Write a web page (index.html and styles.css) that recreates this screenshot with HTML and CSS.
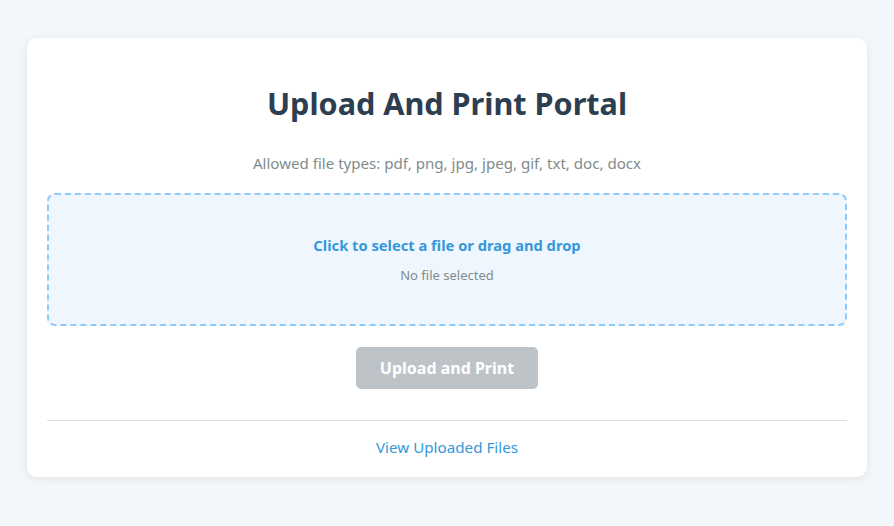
FILE: index.html
```html
<!DOCTYPE html>
<html>
<head>
<meta charset="utf-8">
<link rel="stylesheet" href="styles.css">
</head>
<body>
<main class="card">
  <h1 class="title">Upload And Print Portal</h1>
  <p class="allowed">Allowed file types: pdf, png, jpg, jpeg, gif, txt, doc, docx</p>
  <label class="dropzone">
    <span class="drop-main">Click to select a file or drag and drop</span>
    <span class="drop-sub">No file selected</span>
  </label>
  <div class="actions">
    <button class="btn" disabled>Upload and Print</button>
  </div>
  <hr class="divider">
  <div class="footer">
    <a class="link" href="#">View Uploaded Files</a>
  </div>
</main>
</body>
</html>
```
FILE: styles.css
```css
* { box-sizing: border-box; }
html, body { margin: 0; }
body {
  background: #f4f7fa;
  font-family: "Noto Sans", "Open Sans", sans-serif;
  padding: 38px 27px 50px;
}
.card {
  background: #fff;
  border-radius: 10px;
  box-shadow: 0 2px 10px rgba(0,0,0,0.08);
  padding: 38px 20px 19px;
  max-width: 840px;
  margin: 0 auto;
}
.title {
  margin: 0;
  text-align: center;
  font-size: 30.6px;
  line-height: 54px;
  font-weight: 700;
  color: #2c3e50;
}
.allowed {
  margin: 22px 0 19px;
  text-align: center;
  font-size: 15.1px;
  line-height: 22px;
  color: #7f8c8d;
}
.dropzone {
  display: flex;
  flex-direction: column;
  align-items: center;
  border: 2px dashed #90caf9;
  background: #eff6fe;
  border-radius: 8px;
  padding: 40px 20px 40px;
  cursor: pointer;
}
.drop-main {
  font-size: 14.7px;
  line-height: 20px;
  font-weight: 700;
  color: #3498db;
}
.drop-sub {
  margin-top: 11px;
  font-size: 13px;
  line-height: 18px;
  color: #7f8c8d;
}
.actions {
  display: flex;
  justify-content: center;
  margin-top: 21px;
}
.btn {
  font-family: inherit;
  background: #bdc3c7;
  color: #fff;
  border: 0;
  border-radius: 5px;
  width: 182px;
  height: 42px;
  font-size: 16px;
  font-weight: 700;
}
.divider {
  border: 0;
  border-top: 1px solid #e0e0e0;
  margin: 31px 0 15px;
}
.footer {
  text-align: center;
}
.link {
  color: #3498db;
  text-decoration: none;
  font-size: 15.2px;
  line-height: 22px;
}
```
